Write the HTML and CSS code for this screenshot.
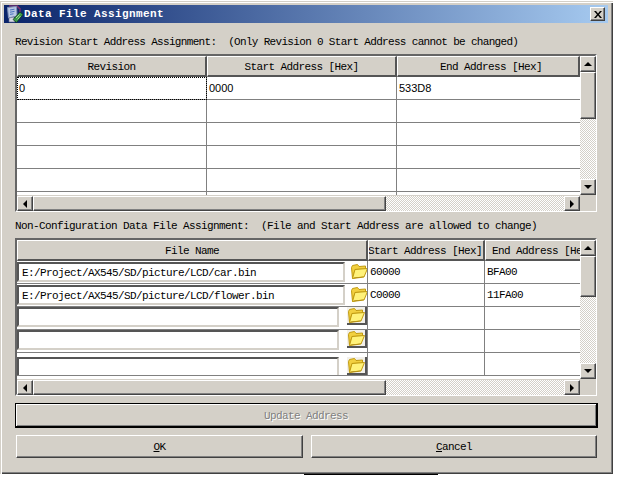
FILE: index.html
```html
<!DOCTYPE html>
<html lang="en">
<head>
<meta charset="utf-8">
<title>Data File Assignment</title>
<link rel="stylesheet" href="styles.css">
</head>
<body>
<svg class="defs" width="0" height="0" aria-hidden="true">
  <symbol id="folder" viewBox="0 0 17 15">
    <path d="M1.5 14.5 L0.5 3.5 L1.5 1.5 L6.5 0.5 L8 2.5 L14.5 2 L14.5 5 L4 5.5 Z" fill="#f2d040" stroke="#c09a10"/>
    <path d="M1.5 14.5 L4 5.5 L16.5 4.5 L13 13 Z" fill="#fff27a" stroke="#c09a10"/>
    <path d="M3 13.5 L12.5 12.5 L13 13 L2 14.5 Z" fill="#b08a10"/>
  </symbol>
</svg>
<div class="window">
  <div class="titlebar">
    <svg class="appicon" width="17" height="18" viewBox="0 0 17 18" aria-hidden="true">
      <path d="M3 1 H12 V3 H14 V7" fill="none" stroke="#a03070"/>
      <path d="M1.5 2.5 L10.5 1.5 L11 11 L2.5 13 Z" fill="#b8c8e4" stroke="#8090b8"/>
      <path d="M4 5 L8.5 4.2 M4 7.2 L8.5 6.4 M4 9.4 L7.5 8.8" stroke="#4a72c0"/>
      <path d="M3 13 L8 12 L9 17 L3 17 Z" fill="#d8d8e4" stroke="#6a7090" stroke-width=".6"/>
      <path d="M7 14.5 L14 7 L17 9.5 L10.5 17.5 Z" fill="#3a9a48" stroke="#0e3a18" stroke-width=".7"/>
      <path d="M10 13 L13.5 9.5 M11.5 14.5 L14.5 11" stroke="#c0ecA8" stroke-width=".8"/>
    </svg>
    <span class="titletext">Data File Assignment</span>
    <div class="closebtn"><svg width="8" height="7" viewBox="0 0 8 7" aria-hidden="true"><path d="M0 0 H2 L4 2.5 L6 0 H8 L5 3.5 L8 7 H6 L4 4.5 L2 7 H0 L3 3.5 Z" fill="#000"/></svg></div>
  </div>
  <div class="content">
    <div class="label tight">Revision Start Address Assignment:  (Only Revision 0 Start Address cannot be changed)</div>
    <div class="gridbox">
      <div class="view revisions">
        <div class="row head">
          <div class="hcell">Revision</div>
          <div class="hcell">Start Address [Hex]</div>
          <div class="hcell shift">End Address [Hex]</div>
        </div>
        <div class="row"><div class="cell sans focus">0</div><div class="cell sans">0000</div><div class="cell sans">533D8</div></div>
        <div class="row"><div class="cell"></div><div class="cell"></div><div class="cell"></div></div>
        <div class="row"><div class="cell"></div><div class="cell"></div><div class="cell"></div></div>
        <div class="row"><div class="cell"></div><div class="cell"></div><div class="cell"></div></div>
        <div class="row"><div class="cell"></div><div class="cell"></div><div class="cell"></div></div>
        <div class="row"><div class="cell"></div><div class="cell"></div><div class="cell"></div></div>
      </div>
      <div class="vbar">
        <div class="sbtn"><i class="arrow up"></i></div>
        <div class="vthumb thumb-a"></div>
        <div class="track"></div>
        <div class="sbtn"><i class="arrow down"></i></div>
      </div>
      <div class="hbar">
        <div class="sbtn"><i class="arrow left"></i></div>
        <div class="hthumb"></div>
        <div class="track"></div>
        <div class="sbtn"><i class="arrow right"></i></div>
      </div>
      <div class="corner"></div>
    </div>
    <div class="label second">Non-Configuration Data File Assignment:  (File and Start Address are allowed to change)</div>
    <div class="gridbox">
      <div class="view files">
        <div class="row head">
          <div class="hcell">File Name</div>
          <div class="hcell clip-mid"><span>Start Address [Hex]</span></div>
          <div class="hcell clip-left">End Address [Hex]</div>
        </div>
        <div class="row">
          <div class="cell filecell wide"><div class="pathbox">E:/Project/AX545/SD/picture/LCD/car.bin</div><svg class="foldericon" width="17" height="15"><use href="#folder"/></svg></div>
          <div class="cell addr">60000</div><div class="cell addr">BFA00</div>
        </div>
        <div class="row">
          <div class="cell filecell wide"><div class="pathbox">E:/Project/AX545/SD/picture/LCD/flower.bin</div><svg class="foldericon" width="17" height="15"><use href="#folder"/></svg></div>
          <div class="cell addr">C0000</div><div class="cell addr">11FA00</div>
        </div>
        <div class="row">
          <div class="cell filecell"><div class="pathbox"></div><div class="folderbtn"><svg width="17" height="15"><use href="#folder"/></svg></div></div>
          <div class="cell"></div><div class="cell"></div>
        </div>
        <div class="row">
          <div class="cell filecell"><div class="pathbox"></div><div class="folderbtn"><svg width="17" height="15"><use href="#folder"/></svg></div></div>
          <div class="cell"></div><div class="cell"></div>
        </div>
        <div class="row">
          <div class="cell filecell low"><div class="pathbox"></div><div class="folderbtn"><svg width="17" height="15"><use href="#folder"/></svg></div></div>
          <div class="cell"></div><div class="cell"></div>
        </div>
      </div>
      <div class="vbar">
        <div class="sbtn"><i class="arrow up"></i></div>
        <div class="vthumb thumb-b"></div>
        <div class="track"></div>
        <div class="sbtn"><i class="arrow down"></i></div>
      </div>
      <div class="hbar">
        <div class="sbtn"><i class="arrow left"></i></div>
        <div class="hthumb"></div>
        <div class="track"></div>
        <div class="sbtn"><i class="arrow right"></i></div>
      </div>
      <div class="corner"></div>
    </div>
    <div class="updatebtn">Update Address</div>
    <div class="actions">
      <div class="btn"><span><u>O</u>K</span></div>
      <div class="btn"><span><u>C</u>ancel</span></div>
    </div>
  </div>
</div>
<div class="backdrop-edge"></div>
</body>
</html>
```

FILE: styles.css
```css
* { box-sizing: border-box; }
html, body { margin: 0; padding: 0; background: #fff; }
body {
  font: 11px/12px "Liberation Mono", monospace;
  letter-spacing: -0.6px;
  color: #000;
  padding-top: 1px;
}
.defs { position: absolute; }
.window {
  width: 613px;
  height: 473px;
  background: #d4d0c8;
  padding: 2px;
  box-shadow: inset 1px 1px 0 #d4d0c8, inset 2px 2px 0 #fff, inset -1px -1px 0 #404040, inset -2px -2px 0 #808080;
}
.backdrop-edge {
  width: 134px;
  height: 1px;
  margin-left: 304px;
  background: #000;
}
.titlebar {
  margin: 2px 3px 0 2px;
  height: 18px;
  background: linear-gradient(90deg, #0a246a, #a6caf0);
  display: flex;
  align-items: center;
  padding: 0 3px 0 2px;
}
.appicon { flex: none; margin-right: 1px; }
.titletext {
  flex: 1;
  color: #fff;
  font-weight: bold;
  letter-spacing: 0.4px;
  line-height: 14px;
}
.closebtn {
  width: 15px;
  height: 14px;
  background: #d4d0c8;
  border: 1px solid;
  border-color: #fff #404040 #404040 #fff;
  box-shadow: inset -1px -1px 0 #808080;
  display: flex;
  align-items: center;
  justify-content: center;
}
.content {
  padding: 12px 0 0 13px;
  width: 597px;
  display: flex;
  flex-direction: column;
}
.label { height: 12px; line-height: 14px; white-space: pre; margin-bottom: 7px; }
.label.tight { letter-spacing: -0.68px; }
.label.second { margin-top: 7px; }
.gridbox {
  width: 582px;
  height: 158px;
  border: 2px solid;
  border-color: #666 #fff #fff #666;
  display: grid;
  grid-template-columns: 563px 16px;
  grid-template-rows: 139px 16px;
}
.view { background: #fff; overflow: hidden; }
.row { display: grid; }
.revisions .row { grid-template-columns: 190px 190px 183px; }
.files .row { grid-template-columns: 351px 117px 95px; }
.head { height: 21px; }
.hcell {
  background: #d4d0c8;
  border-top: 1px solid #fff;
  border-left: 1px solid #fff;
  border-right: 2px solid #555;
  border-bottom: 2px solid #555;
  text-align: center;
  line-height: 20px;
  white-space: nowrap;
  overflow: hidden;
}
.hcell.shift { padding-left: 6px; }
.clip-mid { text-align: left; padding-left: 0; }
.clip-mid span { display: block; margin-left: -1px; }
.clip-left { text-align: left; padding-left: 6px; border-right: 0; }
.cell {
  height: 23px;
  border-right: 1px solid #808080;
  border-bottom: 1px solid #808080;
  padding: 0 2px;
  line-height: 23px;
  white-space: nowrap;
  overflow: hidden;
}
.cell:last-child { border-right: 0; }
.sans { font-family: "Liberation Sans", sans-serif; letter-spacing: 0; }
.addr { line-height: 22px; }
.focus { outline: 1px dotted #000; outline-offset: -1px; }
.filecell {
  display: flex;
  align-items: flex-start;
  padding: 0;
  background: #fff;
}
.filecell.low { padding-top: 4px; }
.pathbox {
  width: 322px;
  height: 20px;
  border: 2px solid;
  border-color: #555 #d4d0c8 #d4d0c8 #555;
  padding: 2px 0 0 3px;
  line-height: 15px;
  background: #fff;
  letter-spacing: -0.6px;
  flex: none;
}
.wide .pathbox { width: 328px; margin-top: 1px; }
.foldericon { margin: 3px 0 0 6px; flex: none; }
.folderbtn {
  width: 20px;
  height: 18px;
  margin-left: 8px;
  display: flex;
  align-items: center;
  justify-content: center;
  background: #f2f0ea;
  border-right: 2px solid #555;
  border-bottom: 2px solid #555;
  flex: none;
}
.vbar {
  display: flex;
  flex-direction: column;
}
.hbar {
  display: flex;
  border-top: 1px solid #d4d0c8;
}
.sbtn {
  width: 16px;
  height: 16px;
  flex: none;
  background: #d4d0c8;
  border: 1px solid;
  border-color: #fff #444 #444 #fff;
  box-shadow: inset -1px -1px 0 #808080;
  display: flex;
  align-items: center;
  justify-content: center;
}
.hbar .sbtn { height: 15px; }
.arrow { width: 0; height: 0; display: block; border: 0 solid transparent; }
.arrow.up { border-width: 0 4px 4px; border-bottom-color: #000; }
.arrow.down { border-width: 4px 4px 0; border-top-color: #000; }
.arrow.left { border-width: 4px 4px 4px 0; border-right-color: #000; }
.arrow.right { border-width: 4px 0 4px 4px; border-left-color: #000; }
.vthumb, .hthumb {
  background: #d4d0c8;
  border: 1px solid;
  border-color: #fff #444 #444 #fff;
  box-shadow: inset -1px -1px 0 #808080;
  flex: none;
}
.thumb-a { height: 47px; }
.thumb-b { height: 41px; }
.hthumb { width: 353px; height: 15px; }
.track {
  flex: 1;
  background: repeating-conic-gradient(#d4d0c8 0 25%, #fff 0 50%) 0 0 / 2px 2px;
}
.corner { background: #d4d0c8; }
.updatebtn {
  width: 583px;
  height: 25px;
  margin-top: 7px;
  background: #d4d0c8;
  border: 1px solid #000;
  border-bottom-width: 2px;
  border-right-width: 2px;
  box-shadow: inset 1px 1px 0 #fff, inset -1px -1px 0 #808080;
  text-align: center;
  line-height: 24px;
  color: #808080;
  text-shadow: 1px 1px 0 #fff;
}
.actions {
  margin: 7px 0 0 1px;
  display: grid;
  grid-template-columns: 287px 286px;
  column-gap: 8px;
}
.btn {
  height: 23px;
  background: #d4d0c8;
  border: 1px solid;
  border-color: #fff #404040 #404040 #fff;
  box-shadow: inset -1px -1px 0 #808080;
  text-align: center;
  line-height: 23px;
}
```
